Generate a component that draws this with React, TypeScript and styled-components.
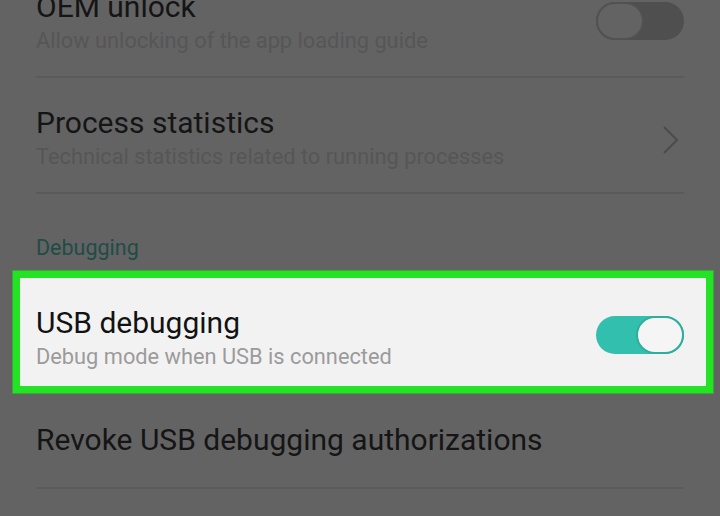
import styled, { createGlobalStyle } from "styled-components";

const GlobalStyle = createGlobalStyle`
  html, body {
    margin: 0;
    padding: 0;
    background: #636363;
    overflow: hidden;
  }
  body {
    font-family: Roboto, "Noto Sans", "Liberation Sans", sans-serif;
  }
`;

const Screen = styled.div`
  width: 720px;
  height: 516px;
  overflow: hidden;
  background: #636363;
`;

const List = styled.div`
  display: flex;
  flex-direction: column;
  margin-top: -38px;
`;

const Row = styled.div<{ $divider?: boolean; $height?: number }>`
  display: flex;
  align-items: center;
  justify-content: space-between;
  margin: 0 36px;
  height: ${(p) => p.$height || 116}px;
  box-sizing: border-box;
  border-bottom: ${(p) => (p.$divider ? "2px solid #5a5a5a" : "none")};
`;

const Texts = styled.div`
  display: flex;
  flex-direction: column;
  gap: 4px;
  margin-top: 6px;
`;

const Title = styled.div<{ $light?: boolean }>`
  font-size: 30px;
  line-height: 34px;
  color: ${(p) => (p.$light ? "#121212" : "#151515")};
`;

const Subtitle = styled.div<{ $light?: boolean }>`
  font-size: 21.8px;
  line-height: 26px;
  color: ${(p) => (p.$light ? "#9b9b9b" : "#565656")};
`;

const SectionHeader = styled.div`
  margin: 0 36px;
  height: 77px;
  box-sizing: border-box;
  padding-bottom: 10px;
  display: flex;
  align-items: flex-end;
  font-size: 21.5px;
  line-height: 26px;
  color: #1f4d45;
`;

const Highlight = styled.div`
  margin: 0 7px 0 13px;
  border: 7px solid #24e324;
  box-shadow: 0 0 0 1px #3aa53a;
  background: #f3f2f3;
  height: 122px;
  box-sizing: border-box;
  display: flex;
  align-items: center;
  justify-content: space-between;
  padding: 5px 22px 0 16px;
`;

const Track = styled.div<{ $on?: boolean }>`
  width: 88px;
  height: 38px;
  border-radius: 19px;
  box-sizing: border-box;
  display: flex;
  justify-content: ${(p) => (p.$on ? "flex-end" : "flex-start")};
  background: ${(p) => (p.$on ? "#33bfad" : "#4f4f4f")};
`;

const Knob = styled.div<{ $on?: boolean }>`
  width: 48px;
  height: 38px;
  border-radius: 19px;
  box-sizing: border-box;
  background: ${(p) => (p.$on ? "#f5f5f5" : "#636363")};
  border: 2px solid ${(p) => (p.$on ? "#2fae9d" : "#525252")};
`;

const ToggleSlot = styled.div<{ $shift?: number }>`
  align-self: flex-start;
  margin-top: ${(p) => p.$shift || 0}px;
`;

const Toggle = ({ on }: { on?: boolean }) => (
  <Track $on={on}>
    <Knob $on={on} />
  </Track>
);

const Chevron = () => (
  <svg width="22" height="32" viewBox="0 0 22 32" style={{ marginRight: 2, marginTop: 10 }}>
    <path d="M4 3 L17 16 L4 29" fill="none" stroke="#4b4b4b" strokeWidth="2" />
  </svg>
);

export default function App() {
  return (
    <Screen>
      <GlobalStyle />
      <List>
        <Row $divider>
          <Texts>
            <Title>OEM unlock</Title>
            <Subtitle>Allow unlocking of the app loading guide</Subtitle>
          </Texts>
          <ToggleSlot $shift={40}>
            <Toggle />
          </ToggleSlot>
        </Row>
        <Row $divider>
          <Texts>
            <Title>Process statistics</Title>
            <Subtitle>Technical statistics related to running processes</Subtitle>
          </Texts>
          <Chevron />
        </Row>
        <SectionHeader>Debugging</SectionHeader>
        <Highlight>
          <Texts>
            <Title $light>USB debugging</Title>
            <Subtitle $light>Debug mode when USB is connected</Subtitle>
          </Texts>
          <Toggle on />
        </Highlight>
        <Row $divider $height={96}>
          <Title>Revoke USB debugging authorizations</Title>
        </Row>
      </List>
    </Screen>
  );
}
